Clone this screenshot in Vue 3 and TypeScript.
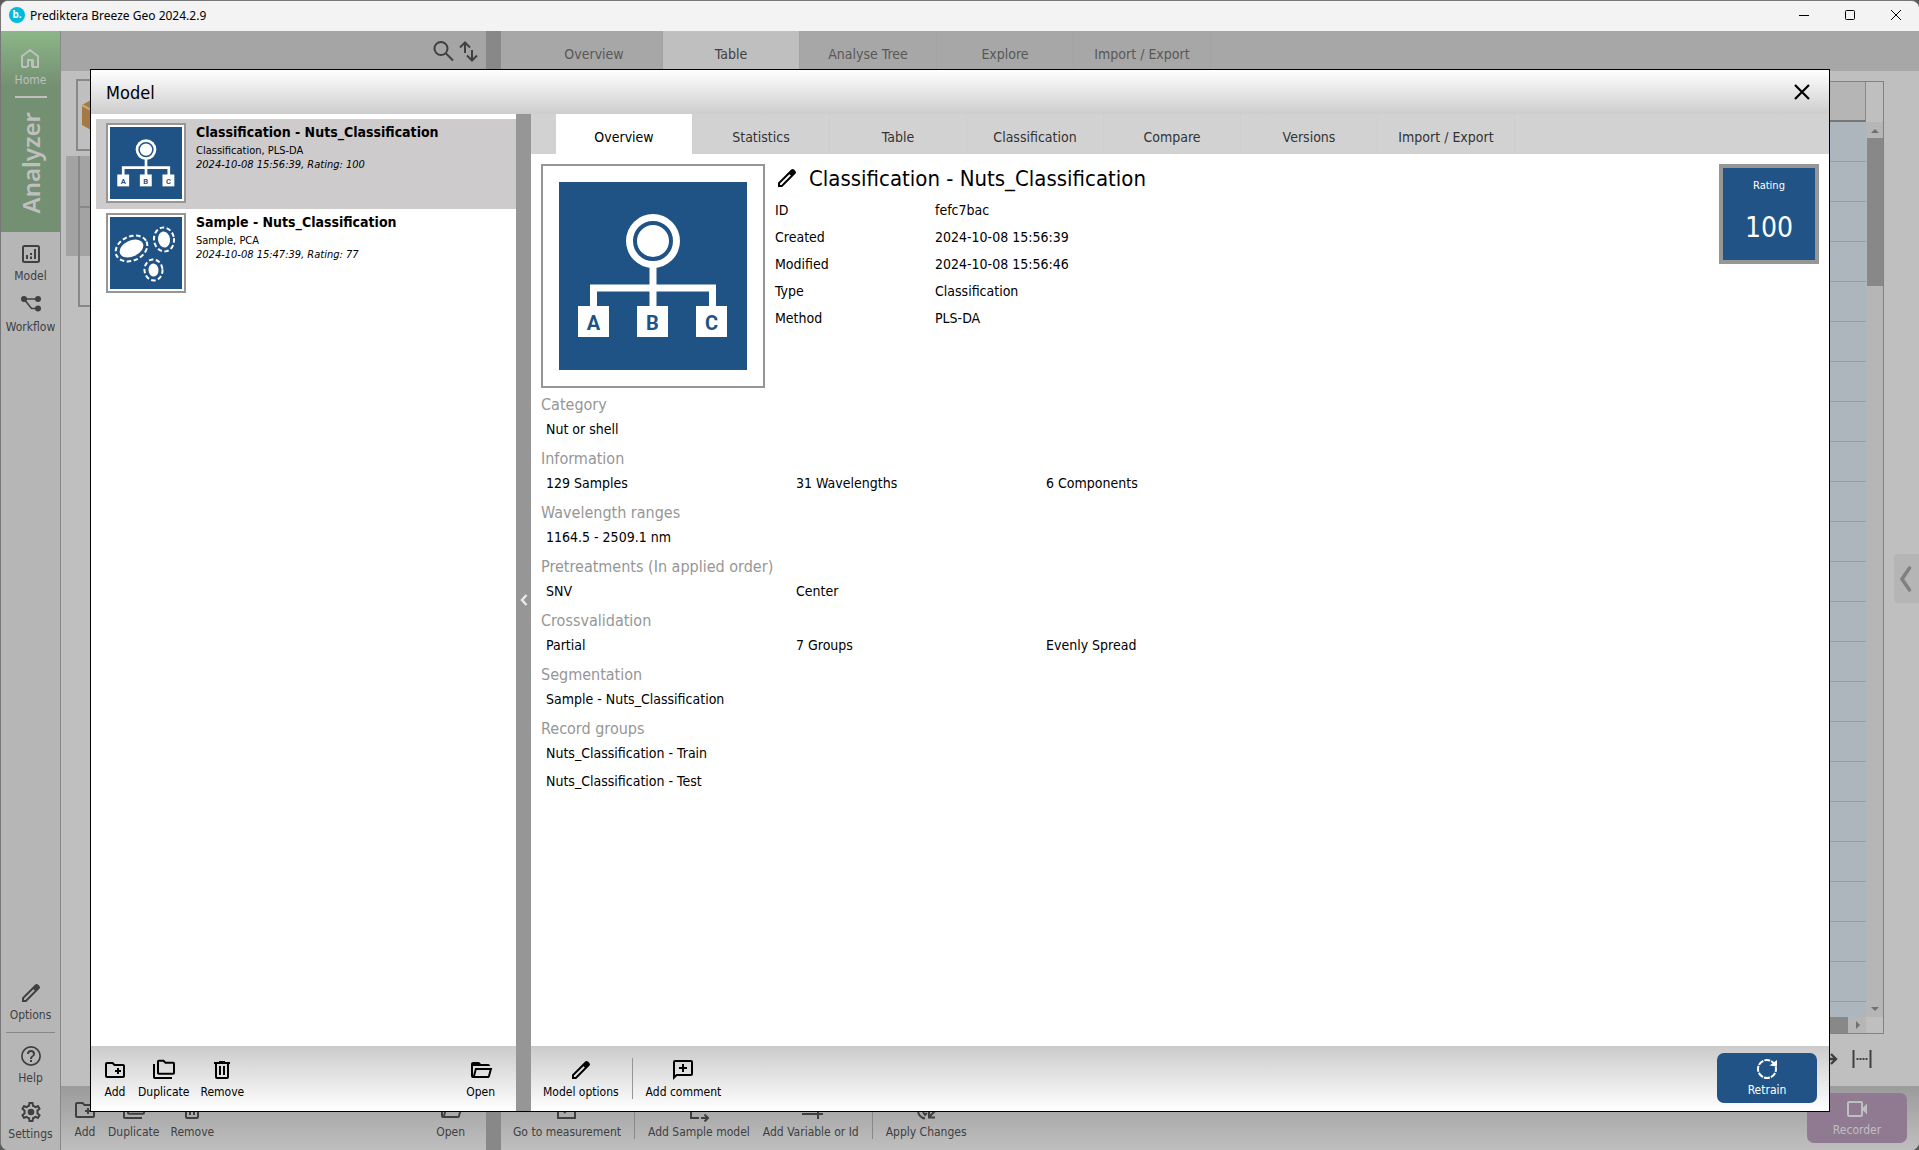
<script setup lang="ts">
import { h, ref } from 'vue'

type Shape = [tag: string, attrs: Record<string, string | number>]

const fill = (d: string): Shape => ['path', { d, fill: 'currentColor', 'fill-rule': 'evenodd' }]
const line = (d: string, width = 2): Shape => ['path', { d, fill: 'none', stroke: 'currentColor', 'stroke-width': width }]

const icons: Record<string, Shape[]> = {
  home: [line('M4 21V10.2L12 4l8 6.200V21h-5v-6.500h-1.500M9 21h-5M10 21v-7h4v7M15 21h5')],
  model: [
    ['rect', { x: 4, y: 4, width: 16, height: 16, rx: 1.5, fill: 'none', stroke: 'currentColor', 'stroke-width': 2 }],
    fill('M7 13h2v4H7zM11 14.500h2V17h-2zM11 11h2v2h-2zM15 7h2v10h-2z'),
  ],
  workflow: [
    line('M5 6h14M5 6l7.500 9.500H19', 1.6),
    fill('M5 3a3 3 0 1 1 0 6a3 3 0 0 1 0-6zM19 3a3 3 0 1 1 0 6a3 3 0 0 1 0-6zM19 12.500a3 3 0 1 1 0 6a3 3 0 0 1 0-6z'),
  ],
  pencil: [fill('M3 21v-4.250L16.200 3.600a2 2 0 0 1 2.800 0l1.400 1.400a2 2 0 0 1 0 2.800L7.250 21zM5 19h1.400L15.800 9.600 14.400 8.200 5 17.600z')],
  help: [fill('M11 18h2v-2h-2v2M12 2A10 10 0 0 0 2 12a10 10 0 0 0 10 10a10 10 0 0 0 10-10A10 10 0 0 0 12 2M12 20.300A8.300 8.300 0 1 1 12 3.700A8.300 8.300 0 0 1 12 20.300M12 6a4 4 0 0 0-4 4h2a2 2 0 0 1 4 0c0 2-3 1.750-3 5h2c0-2.250 3-2.500 3-5a4 4 0 0 0-4-4z')],
  settings: [
    fill('M19.43 12.98c.04-.32.07-.64.07-.98 0-.34-.03-.66-.07-.98l2.110-1.650c.19-.15.24-.42.12-.64l-2-3.460c-.09-.16-.26-.25-.44-.25-.06 0-.12.01-.17.03l-2.490 1c-.52-.4-1.080-.73-1.690-.98l-.38-2.650C14.460 2.180 14.250 2 14 2h-4c-.25 0-.46.18-.49.42l-.38 2.650c-.61.25-1.170.59-1.690.98l-2.490-1c-.06-.02-.12-.03-.18-.03-.17 0-.34.09-.43.25l-2 3.460c-.13.22-.07.49.12.64l2.110 1.650c-.04.32-.07.65-.07.98 0 .33.03.66.07.98l-2.110 1.650c-.19.15-.24.42-.12.64l2 3.460c.09.16.26.25.44.25.06 0 .12-.01.17-.03l2.490-1c.52.4 1.080.73 1.690.98l.38 2.650c.03.24.24.42.49.42h4c.25 0 .46-.18.49-.42l.38-2.650c.61-.25 1.170-.59 1.690-.98l2.490 1c.06.02.12.03.18.03.17 0 .34-.09.43-.25l2-3.460c.12-.22.07-.49-.12-.64l-2.110-1.650zm-1.980-1.710c.04.31.05.52.05.73 0 .21-.02.43-.05.73l-.14 1.130.89.7 1.080.84-.7 1.210-1.270-.51-1.040-.42-.9.68c-.43.32-.84.56-1.250.73l-1.060.43-.16 1.130-.2 1.350h-1.400l-.19-1.350-.16-1.130-1.060-.43c-.43-.18-.83-.41-1.230-.71l-.91-.7-1.060.43-1.270.51-.7-1.210 1.080-.84.89-.7-.14-1.130c-.03-.31-.05-.54-.05-.74s.02-.43.05-.73l.14-1.130-.89-.7-1.080-.84.7-1.210 1.270.51 1.040.42.9-.68c.43-.32.84-.56 1.250-.73l1.060-.43.16-1.130.2-1.350h1.390l.19 1.350.16 1.130 1.060.43c.43.18.83.41 1.230.71l.91.7 1.060-.43 1.270-.51.7 1.210-1.070.85-.89.7.14 1.130z'),
    ['circle', { cx: 12, cy: 12, r: 3.3, fill: 'currentColor' }],
  ],
  add: [fill('M20 6h-8l-2-2H4c-1.110 0-1.990.89-1.990 2L2 18c0 1.110.89 2 2 2h16c1.110 0 2-.89 2-2V8c0-1.110-.89-2-2-2zm0 12H4V6h5.170l2 2H20v10zm-8-4h2v2h2v-2h2v-2h-2v-2h-2v2h-2z')],
  duplicate: [line('M6 3.500a.8.8 0 0 1 .8-.8h4.700l2 2h7.700a.8.8 0 0 1 .8.800V15a.8.8 0 0 1-.8.800H6.800A.8.8 0 0 1 6 15zM2 6v13.200a.8.8 0 0 0 .8.800H20')],
  remove: [fill('M9 3v1H4v2h1v13a2 2 0 0 0 2 2h10a2 2 0 0 0 2-2V6h1V4h-5V3H9M7 6h10v13H7V6M9 8v9h2V8H9M13 8v9h2V8h-2z')],
  open: [fill('M6.100 10L4 18V8h17a2 2 0 0 0-2-2h-7l-2-2H4a2 2 0 0 0-2 2v12a2 2 0 0 0 2 2h15c.9 0 1.700-.6 1.900-1.500L23.200 10H6.100M19 18H6l1.600-6h13L19 18z')],
  comment: [fill('M4 2h16a2 2 0 0 1 2 2v12a2 2 0 0 1-2 2H6l-4 4V4a2 2 0 0 1 2-2zM4 4v13.200L5.200 16H20V4zM11 6h2v3h3v2h-3v3h-2v-3H8V9h3z')],
  retrain: [
    ['circle', { cx: 12, cy: 12, r: 9, fill: 'none', stroke: 'currentColor', 'stroke-width': 2, 'stroke-dasharray': '6 1.069', 'stroke-dashoffset': 3 }],
    fill('M14.500 8.500L22 9.500V3z'),
  ],
  recorder: [
    ['rect', { x: 3, y: 5, width: 14, height: 14, rx: 1, fill: 'none', stroke: 'currentColor', 'stroke-width': 2 }],
    fill('M17 11.500l5-5v11l-5-5z'),
  ],
  search: [line('M9 3a6.500 6.500 0 1 1 0 13a6.500 6.500 0 0 1 0-13zM13.800 14.300L21 21.500')],
  sort: [line('M8 14V4M3 8.500L8 3.500l5 5M15 11v10M10 16.500l5 5l5-5')],
  measure: [line('M3 13v7h17V5h-6M9 15l7-7')],
  sample: [line('M9 3H4v17h8M4 3v17M14 20h7M17.500 16.500L21 20l-3.500 3.500')],
  variable: [line('M3 16h11M19 11v10M14 16h10')],
  apply: [line('M11 20.500A8 8 0 0 1 4 12.500M9 14l2 3L13 15'), line('M21 13l-6 6M15 13v6.500h6')],
  close: [line('M5 5l14 14M19 5L5 19', 2.2)],
  arrow: [line('M2 12h18M15 7l5 5-5 5', 2.4)],
  spread: [line('M3.500 3v18M20.500 3v18'), fill('M6.500 11h2v2h-2zM9.500 11h2v2h-2zM12.500 11h2v2h-2zM15.500 11h2v2h-2z')],
}

const Icon = (props: { name: string }) =>
  h('svg', { class: 'icon', viewBox: '0 0 24 24', width: 24, height: 24, 'aria-hidden': 'true' },
    icons[props.name].map(([tag, attrs]) => h(tag, attrs)))
Icon.props = ['name']

const TreePicture = () =>
  h('svg', { viewBox: '0 0 188 188', width: '100%', height: '100%', style: 'display:block' }, [
    h('rect', { width: 188, height: 188, fill: '#1f5386' }),
    h('path', { d: 'M94 84v44M34.500 128v-22h119v22', stroke: '#fff', 'stroke-width': 7, fill: 'none' }),
    h('circle', { cx: 94, cy: 59, r: 27, fill: '#fff' }),
    h('circle', { cx: 94, cy: 59, r: 18, fill: '#fff', stroke: '#1f5386', 'stroke-width': 4 }),
    ...['A', 'B', 'C'].flatMap((letter, i) => [
      h('rect', { x: 19 + i * 59, y: 124, width: 31, height: 31, fill: '#fff' }),
      h('text', { x: 34.5 + i * 59, y: 148, 'text-anchor': 'middle', 'font-size': 20, 'font-weight': 700, 'font-family': 'Roboto, sans-serif', fill: '#1f5386' }, letter),
    ]),
  ])

const SamplePicture = () =>
  h('svg', { viewBox: '0 0 72 72', width: '100%', height: '100%', style: 'display:block' }, [
    h('rect', { width: 72, height: 72, fill: '#1f5386' }),
    ...[
      [21.5, 31.5, 12.5, 8, -25],
      [54, 22.5, 6, 8, -8],
      [43.5, 53, 5, 6.5, -5],
    ].flatMap(([cx, cy, rx, ry, turn]) => [
      h('ellipse', { cx, cy, rx, ry, fill: '#fff', transform: `rotate(${turn} ${cx} ${cy})` }),
      h('ellipse', { cx, cy, rx: rx + 4, ry: ry + 4, fill: 'none', stroke: '#fff', 'stroke-width': 2, 'stroke-dasharray': '4.5 2.5', transform: `rotate(${turn} ${cx} ${cy})` }),
    ]),
  ])

const backTabs = ['Overview', 'Table', 'Analyse Tree', 'Explore', 'Import / Export']
const tabs = ['Overview', 'Statistics', 'Table', 'Classification', 'Compare', 'Versions', 'Import / Export']
const activeTab = ref('Overview')

const listActions = [
  { icon: 'add', label: 'Add' },
  { icon: 'duplicate', label: 'Duplicate' },
  { icon: 'remove', label: 'Remove' },
]

const models = [
  { name: 'Classification - Nuts_Classification', kind: 'Classification, PLS-DA', note: '2024-10-08 15:56:39, Rating: 100', picture: TreePicture },
  { name: 'Sample - Nuts_Classification', kind: 'Sample, PCA', note: '2024-10-08 15:47:39, Rating: 77', picture: SamplePicture },
]
const selected = ref(0)

const facts = [
  ['ID', 'fefc7bac'],
  ['Created', '2024-10-08 15:56:39'],
  ['Modified', '2024-10-08 15:56:46'],
  ['Type', 'Classification'],
  ['Method', 'PLS-DA'],
]

const sections = [
  { title: 'Category', rows: [['Nut or shell']] },
  { title: 'Information', rows: [['129 Samples', '31 Wavelengths', '6 Components']] },
  { title: 'Wavelength ranges', rows: [['1164.5 - 2509.1 nm']] },
  { title: 'Pretreatments (In applied order)', rows: [['SNV', 'Center']] },
  { title: 'Crossvalidation', rows: [['Partial', '7 Groups', 'Evenly Spread']] },
  { title: 'Segmentation', rows: [['Sample - Nuts_Classification']] },
  { title: 'Record groups', rows: [['Nuts_Classification - Train'], ['Nuts_Classification - Test']] },
]
</script>

<template>
  <div class="window">
    <header class="titlebar">
      <span class="logo">b.</span>
      <span class="app-name">Prediktera Breeze Geo 2024.2.9</span>
      <button class="win-btn" aria-label="Minimize"><svg width="12" height="12"><path d="M1 6.500h10" stroke="#000" /></svg></button>
      <button class="win-btn" aria-label="Maximize"><svg width="12" height="12"><rect x="1.500" y="1.500" width="9" height="9" rx="1" fill="none" stroke="#000" /></svg></button>
      <button class="win-btn" aria-label="Close window"><svg width="12" height="12"><path d="M1 1l10 10M11 1L1 11" stroke="#000" /></svg></button>
    </header>

    <div class="body">
      <nav class="sidebar">
        <div class="brand">
          <button class="tool"><Icon name="home" /><span>Home</span></button>
          <span class="brand-line"></span>
          <span class="brand-name">Analyzer</span>
        </div>
        <div class="side-top">
          <button class="tool"><Icon name="model" /><span>Model</span></button>
          <button class="tool"><Icon name="workflow" /><span>Workflow</span></button>
        </div>
        <div class="side-bottom">
          <button class="tool"><Icon name="pencil" /><span>Options</span></button>
          <span class="side-line"></span>
          <button class="tool"><Icon name="help" /><span>Help</span></button>
          <button class="tool last"><Icon name="settings" /><span>Settings</span></button>
        </div>
      </nav>

      <section class="back-list">
        <div class="back-bar"><Icon name="search" /><Icon name="sort" /></div>
        <div class="back-cards">
          <div class="back-card">
            <svg width="48" height="48" viewBox="0 0 48 48"><path d="M4 14L24 3l20 11v20L24 45 4 34z" fill="#a37a41" /><path d="M4 14l20 11 20-11M24 25v20" stroke="#c4a97f" stroke-width="2" fill="none" /></svg>
          </div>
          <div class="back-selected"><div></div><div></div></div>
          <div class="back-rest"></div>
        </div>
        <footer class="back-footer">
          <button v-for="a in listActions" :key="a.label" class="tool"><Icon :name="a.icon" /><span>{{ a.label }}</span></button>
          <button class="tool push"><Icon name="open" /><span>Open</span></button>
        </footer>
      </section>

      <div class="back-splitter"></div>

      <section class="back-main">
        <div class="back-tabs">
          <button v-for="t in backTabs" :key="t" class="tab" :class="{ on: t === 'Table' }">{{ t }}</button>
        </div>
        <div class="back-content">
          <div class="grid-area">
            <div class="grid">
              <div class="grid-body">
                <div class="grid-head"></div>
                <div class="grid-rows"><div v-for="n in 23" :key="n" class="grid-row"></div></div>
                <div class="hscroll"><span class="hthumb"></span><span class="caret right"></span></div>
              </div>
              <div class="vscroll">
                <span class="caret up"></span><span class="vthumb"></span><span class="caret down"></span>
              </div>
            </div>
            <div class="back-fit"><Icon name="arrow" /><Icon name="spread" /></div>
          </div>
          <button class="drawer" aria-label="Expand panel"><svg width="14" height="28"><path d="M11.500 3L4 14l7.500 11" fill="none" stroke="#808080" stroke-width="3.500" stroke-linecap="round" /></svg></button>
        </div>
        <footer class="back-footer">
          <button class="tool"><Icon name="measure" /><span>Go to measurement</span></button>
          <span class="sep"></span>
          <button class="tool"><Icon name="sample" /><span>Add Sample model</span></button>
          <button class="tool"><Icon name="variable" /><span>Add Variable or Id</span></button>
          <span class="sep"></span>
          <button class="tool"><Icon name="apply" /><span>Apply Changes</span></button>
          <button class="action recorder"><Icon name="recorder" /><span>Recorder</span></button>
        </footer>
      </section>
    </div>

    <div class="dialog" role="dialog" aria-labelledby="dialog-title">
      <header class="dialog-head">
        <h1 id="dialog-title">Model</h1>
        <button class="close" aria-label="Close"><Icon name="close" /></button>
      </header>
      <div class="dialog-body">
        <aside class="list">
          <div class="items">
            <button v-for="(m, i) in models" :key="m.name" class="item" :class="{ on: i === selected }" @click="selected = i">
              <span class="thumb"><component :is="m.picture" /></span>
              <span class="item-text">
                <strong>{{ m.name }}</strong>
                <span>{{ m.kind }}</span>
                <em>{{ m.note }}</em>
              </span>
            </button>
          </div>
          <footer class="footer">
            <button v-for="a in listActions" :key="a.label" class="tool"><Icon :name="a.icon" /><span>{{ a.label }}</span></button>
            <button class="tool push"><Icon name="open" /><span>Open</span></button>
          </footer>
        </aside>

        <div class="splitter">
          <svg width="10" height="14"><path d="M7.500 2L3 7l4.500 5" fill="none" stroke="#e8e8e8" stroke-width="2.500" /></svg>
        </div>

        <main class="detail">
          <div class="tabs" role="tablist">
            <button v-for="t in tabs" :key="t" class="tab" role="tab" :class="{ on: t === activeTab }" @click="activeTab = t">{{ t }}</button>
          </div>
          <div class="content">
            <div class="summary">
              <div class="picture"><TreePicture /></div>
              <div class="about">
                <div class="name-row">
                  <button class="rename" aria-label="Rename"><Icon name="pencil" /></button>
                  <h2>Classification - Nuts_Classification</h2>
                </div>
                <dl class="facts">
                  <div v-for="[k, v] in facts" :key="k"><dt>{{ k }}</dt><dd>{{ v }}</dd></div>
                </dl>
              </div>
              <div class="rating"><span>Rating</span><b>100</b></div>
            </div>
            <section v-for="s in sections" :key="s.title" class="section">
              <h3>{{ s.title }}</h3>
              <div v-for="(row, r) in s.rows" :key="r" class="values">
                <span v-for="v in row" :key="v">{{ v }}</span>
              </div>
            </section>
          </div>
          <footer class="footer">
            <button class="tool"><Icon name="pencil" /><span>Model options</span></button>
            <span class="sep"></span>
            <button class="tool"><Icon name="comment" /><span>Add comment</span></button>
            <button class="action retrain"><Icon name="retrain" /><span>Retrain</span></button>
          </footer>
        </main>
      </div>
    </div>
  </div>
</template>

<style>
body {
  background: #5a5a5a;
}
</style>

<style scoped>
* {
  box-sizing: border-box;
}
.window {
  position: relative;
  display: flex;
  flex-direction: column;
  height: 100vh;
  border: solid #777;
  border-width: 1px 0 0 1px;
  border-radius: 8px;
  overflow: hidden;
  background: #bfbfbf;
  color: #404040;
  font-family: "DejaVu Sans Condensed", "DejaVu Sans", sans-serif;
  font-size: 14px;
}
button {
  padding: 0;
  border: 0;
  background: none;
  color: inherit;
  font: inherit;
}
h1, h2, h3, dl, dd {
  margin: 0;
  font-weight: 400;
}
.icon {
  flex: none;
  display: block;
}

.titlebar {
  display: flex;
  align-items: center;
  height: 30px;
  padding: 0 0 2px 8px;
  background: #f3f3f3;
  color: #000;
  font-family: "Noto Sans", sans-serif;
  font-size: 12px;
}
.logo {
  width: 16px;
  height: 16px;
  margin-right: 5px;
  border-radius: 50%;
  background: #00bcdc;
  color: #fff;
  font-size: 10px;
  font-weight: 700;
  line-height: 15px;
  text-align: center;
}
.app-name {
  flex: 1;
}
.win-btn {
  display: flex;
  align-items: center;
  justify-content: center;
  width: 46px;
  height: 28px;
}

.body {
  flex: 1;
  display: flex;
  min-height: 0;
}
.tool {
  display: flex;
  flex-direction: column;
  align-items: center;
  gap: 2px;
  font-size: 12px;
  line-height: 16px;
  white-space: nowrap;
}

.sidebar {
  display: flex;
  flex-direction: column;
  width: 60px;
  border-right: 1px solid #888;
  background: #b6b6b6;
}
.brand {
  display: flex;
  flex-direction: column;
  align-items: center;
  height: 201px;
  padding-top: 15px;
  background: linear-gradient(#8cb688, #749072 55px);
  color: #bfbfbf;
}
.brand-line {
  width: 32px;
  height: 2px;
  margin: 8px 0 14px;
  background: #bfbfbf;
}
.brand-name {
  writing-mode: vertical-rl;
  transform: rotate(180deg);
  font-family: "Noto Sans", sans-serif;
  font-size: 24px;
  font-weight: 600;
  line-height: 32px;
}
.side-top {
  display: flex;
  flex-direction: column;
  gap: 9px;
  padding-top: 10px;
}
.side-bottom {
  display: flex;
  flex-direction: column;
  margin-top: auto;
  padding-bottom: 8px;
}
.side-line {
  height: 1px;
  margin: 9px 5px 11px;
  background: #888;
}
.last {
  margin-top: 14px;
}

.back-list {
  display: flex;
  flex-direction: column;
  width: 425px;
}
.back-bar {
  display: flex;
  justify-content: flex-end;
  align-items: center;
  gap: 1px;
  height: 40px;
  padding-right: 5px;
  background: #a5a5a5;
}
.back-cards {
  flex: 1;
  display: flex;
  flex-direction: column;
  padding: 8px 5px 0;
}
.back-card {
  display: flex;
  align-items: center;
  height: 72px;
  margin: 0 10px 5px;
  border: 2px solid #888;
}
.back-selected {
  height: 100px;
  padding-left: 12px;
  background: #a3a3a3;
}
.back-selected div {
  height: 50px;
  border-left: 2px solid #888;
}
.back-selected div + div {
  border-top: 2px solid #888;
}
.back-rest {
  height: 51px;
  margin-left: 12px;
  border: solid #888;
  border-width: 0 0 2px 2px;
}
.back-footer {
  display: flex;
  gap: 13px;
  height: 64px;
  padding: 12px 12px 0;
  background: linear-gradient(#9b9b9b, #bfbfbf);
}
.push {
  margin-left: auto;
}
.back-list .back-footer,
.list .footer {
  gap: 11px;
  padding: 12px 21px 0 12px;
}
.back-splitter {
  width: 15px;
  background: #888;
}
.back-main {
  flex: 1;
  display: flex;
  flex-direction: column;
  min-width: 0;
}
.back-tabs,
.tabs {
  display: flex;
  flex: none;
  height: 40px;
  padding-left: 25px;
}
.back-tabs {
  background: #a7a7a7;
  color: #585858;
}
.tab {
  width: 137px;
  padding-top: 5px;
  border-right: 1px solid #a3a3a3;
}
.back-tabs .on {
  background: #bfbfbf;
  color: #404040;
}
.back-content {
  flex: 1;
  display: flex;
  align-items: center;
  min-height: 0;
  padding-left: 10px;
}
.grid-area {
  flex: 1;
  align-self: stretch;
  display: flex;
  flex-direction: column;
  padding-top: 10px;
}
.grid {
  flex: 1;
  display: flex;
  min-height: 0;
  border: solid #808386;
  border-width: 1px 1px 1px 1px;
}
.grid-body {
  flex: 1;
  display: flex;
  flex-direction: column;
}
.grid-head {
  height: 40px;
  border-right: 1px solid #888;
  border-bottom: 2px solid #777;
  background: #b5b5b5;
}
.grid-rows {
  flex: 1;
  min-height: 0;
  overflow: hidden;
  background: #adb5bd;
}
.grid-row {
  height: 40px;
  border-bottom: 1px solid #999da1;
}
.hscroll {
  display: flex;
  align-items: center;
  gap: 8px;
  height: 16px;
  padding-right: 6px;
  background: #b6b6b6;
}
.hthumb {
  flex: 1;
  height: 16px;
  background: #888;
}
.vscroll {
  display: flex;
  flex-direction: column;
  align-items: center;
  width: 17px;
  margin: 40px 0 16px;
  padding: 7px 0 6px;
  background: #b6b6b6;
}
.vthumb {
  width: 16px;
  height: 148px;
  margin: 5px 0 auto;
  background: #888;
}
.caret {
  border: 4px solid transparent;
}
.up {
  border-top: 0;
  border-bottom-color: #707070;
}
.down {
  border-bottom: 0;
  border-top-color: #707070;
}
.right {
  border-right: 0;
  border-left-color: #707070;
}
.drawer {
  display: flex;
  align-items: center;
  width: 25px;
  height: 49px;
  margin-left: 10px;
  padding-left: 4px;
  border-radius: 4px 0 0 4px;
  background: #b5b5b5;
}
.back-fit {
  display: flex;
  justify-content: flex-end;
  align-items: center;
  gap: 10px;
  height: 52px;
  padding: 0 10px 2px 0;
}

.dialog {
  position: absolute;
  inset: 68px 89px 38px 89px;
  display: flex;
  flex-direction: column;
  border: 1px solid #000;
  background: #fff;
  color: #000;
}
.dialog-head {
  display: flex;
  align-items: center;
  justify-content: space-between;
  height: 44px;
  padding: 0 15px;
  background: linear-gradient(#fff, #cdcdcd);
}
h1 {
  font-size: 18px;
}
.dialog-body {
  flex: 1;
  display: flex;
  min-height: 0;
}
.list {
  display: flex;
  flex-direction: column;
  width: 425px;
}
.items {
  flex: 1;
  padding: 5px 0 0 5px;
}
.item {
  display: flex;
  gap: 10px;
  width: 100%;
  height: 90px;
  padding: 4px 10px;
  text-align: left;
}
.item.on {
  background: #cdcbcc;
}
.thumb {
  flex: none;
  width: 80px;
  height: 80px;
  padding: 2px;
  border: 2px solid #969696;
  background: #fff;
}
.item-text {
  display: flex;
  flex-direction: column;
  font-size: 11px;
  line-height: 14px;
  white-space: nowrap;
}
.item-text strong {
  margin-bottom: 3px;
  font-size: 14px;
  line-height: 18px;
}
.footer {
  display: flex;
  gap: 13px;
  height: 65px;
  padding: 12px 12px 0;
  background: linear-gradient(#cbcbcb, #fff);
}
.splitter {
  display: flex;
  align-items: center;
  justify-content: center;
  width: 15px;
  padding-bottom: 26px;
  background: #969696;
}
.sep {
  width: 1px;
  height: 41px;
  background: #969696;
}
.back-footer .sep {
  background: #888;
}
.detail {
  flex: 1;
  display: flex;
  flex-direction: column;
  min-width: 0;
}
.tabs {
  background: #d2d2d2;
  color: #333;
}
.tabs .tab {
  border-color: #cecece;
}
.tabs .on {
  background: #fff;
  color: #000;
}
.content {
  flex: 1;
  min-height: 0;
  padding: 10px;
}
.summary {
  display: flex;
  align-items: flex-start;
  gap: 10px;
  margin-bottom: 4px;
}
.picture {
  flex: none;
  width: 224px;
  height: 224px;
  padding: 16px;
  border: 2px solid #969696;
}
.about {
  flex: 1;
}
.name-row {
  display: flex;
  align-items: center;
  gap: 10px;
  height: 28px;
  margin-bottom: 5px;
}
h2 {
  font-size: 22px;
}
.facts > div {
  display: flex;
  height: 27px;
  line-height: 27px;
}
dt {
  width: 160px;
}
.rating {
  display: flex;
  flex-direction: column;
  align-items: center;
  width: 100px;
  height: 100px;
  padding-top: 11px;
  border: 4px solid #969696;
  background: #215387;
  color: #fff;
  font-size: 11px;
  line-height: 14px;
}
.rating b {
  margin-top: 17px;
  font-size: 28px;
  font-weight: 400;
  line-height: 36px;
}
.section {
  margin-bottom: 6px;
}
h3 {
  color: #969696;
  font-size: 16px;
  line-height: 26px;
}
.values {
  display: flex;
  padding-left: 5px;
  line-height: 22px;
}
.values + .values {
  margin-top: 6px;
}
.values span {
  width: 250px;
}
.action {
  display: flex;
  flex-direction: column;
  align-items: center;
  gap: 1px;
  width: 100px;
  height: 50px;
  margin: -5px 0 0 auto;
  padding-top: 4px;
  border-radius: 7px;
  background: #215387;
  color: #fff;
  font-size: 12px;
  line-height: 16px;
}
.recorder {
  background: #8f7a92;
  color: #bfbfbf;
}
</style>
